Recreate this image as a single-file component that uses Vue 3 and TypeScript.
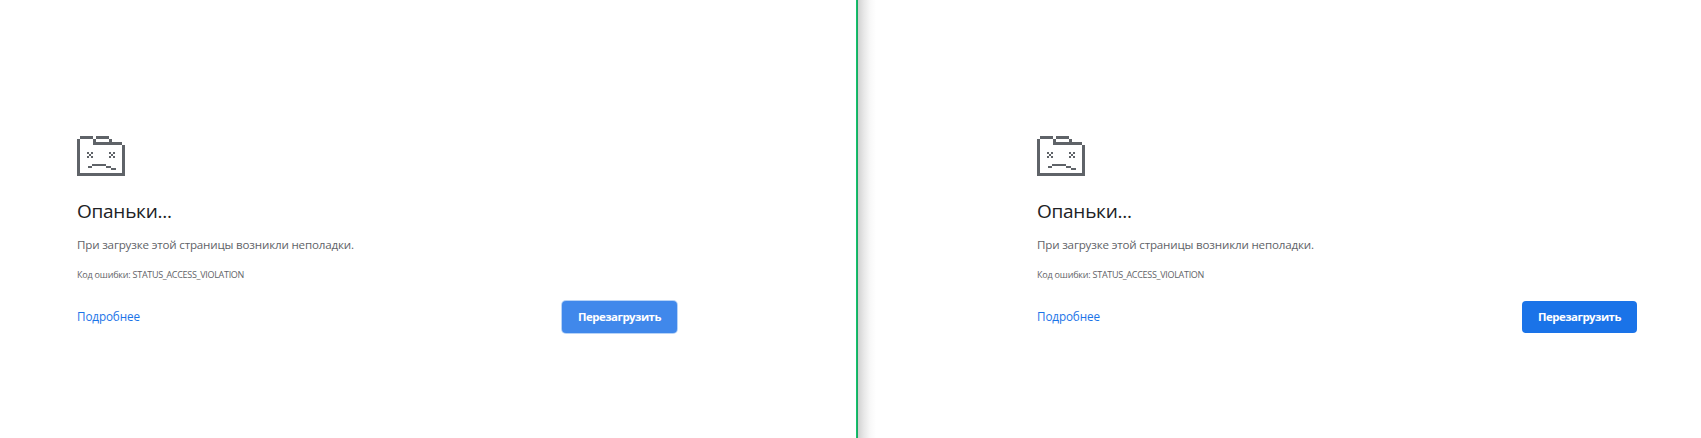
<script setup lang="ts">
interface Pane {
  id: string
  pressed: boolean
}

const panes: Pane[] = [
  { id: 'left', pressed: true },
  { id: 'right', pressed: false },
]
</script>

<template>
  <div class="screen">
    <main v-for="pane in panes" :key="pane.id" class="pane" :class="pane.id">
      <div class="content">
        <svg class="icon" width="48" height="40" viewBox="0 0 48 40" shape-rendering="crispEdges" aria-hidden="true">
          <path
            fill="#5f6368"
            d="M3 0H16V3H3ZM19 0H32V3H19ZM0 3H3V37H45V9H16V3H19V6H32V3H35V6H48V40H0Z"
          />
          <path fill="#fff" d="M45 6H48V9H45Z" />
          <path
            fill="#5f6368"
            d="M10 16h2v2h-2zM14 16h2v2h-2zM12 18h2v2h-2zM10 20h2v2h-2zM14 20h2v2h-2zM32 16h2v2h-2zM36 16h2v2h-2zM34 18h2v2h-2zM32 20h2v2h-2zM36 20h2v2h-2zM15 28h14v2h-14zM11 30h4v2h-4zM29 30h5v2h-5zM34 32h5v2h-5z"
          />
        </svg>
        <h1>Опаньки...</h1>
        <p class="message">При загрузке этой страницы возникли неполадки.</p>
        <p class="code">Код ошибки: <span class="status">STATUS_ACCESS_VIOLATION</span></p>
        <div class="actions">
          <a class="details">Подробнее</a>
          <button type="button" :class="{ pressed: pane.pressed }">Перезагрузить</button>
        </div>
      </div>
    </main>
  </div>
</template>

<style>
body {
  margin: 0;
  background: #fff;
}
</style>

<style scoped>
.screen {
  display: flex;
  width: 1701px;
  height: 438px;
  overflow: hidden;
  background: #fff;
  font-family: "Open Sans", "Noto Sans", sans-serif;
}
.pane {
  box-sizing: border-box;
  height: 438px;
  padding: 136px 0 0 77px;
}
.left {
  width: 856px;
}
.right {
  width: 845px;
  padding-left: 181px;
  background: linear-gradient(90deg, #0fc56c 0 1px, #20a563 1px 2px, #d2d2d2 2px, #e8e8e8 8px, #f8f8f8 14px, #fff 20px);
}
.content {
  width: 600px;
}
.icon {
  display: block;
}
h1 {
  margin: 21px 0 0;
  height: 28px;
  color: #202124;
  font-size: 19px;
  font-weight: 400;
  line-height: 28px;
  letter-spacing: -0.25px;
  white-space: nowrap;
}
p {
  margin: 0;
  color: #5f6368;
  white-space: nowrap;
}
.message {
  margin-top: 10px;
  height: 20px;
  font-size: 11.6px;
  line-height: 20px;
  letter-spacing: -0.18px;
}
.code {
  margin-top: 11px;
  height: 18px;
  font-size: 9px;
  line-height: 18px;
  letter-spacing: -0.2px;
}
.status {
  letter-spacing: -0.3px;
}
.actions {
  display: flex;
  align-items: center;
  justify-content: space-between;
  width: 600px;
  height: 34px;
  margin-top: 16px;
}
.details {
  padding-bottom: 2px;
  color: #1a73e8;
  font-size: 11.7px;
  letter-spacing: -0.12px;
}
button {
  box-sizing: border-box;
  width: 115px;
  height: 32px;
  padding: 0 0 2px;
  border: 0;
  border-radius: 4px;
  background: #1a73e8;
  color: #fff;
  font: 700 11.4px "Open Sans", "Noto Sans", sans-serif;
  letter-spacing: -0.5px;
}
.pressed {
  background: #4088eb;
  box-shadow: 0 0 0 1px #b7d3f7;
}
</style>
